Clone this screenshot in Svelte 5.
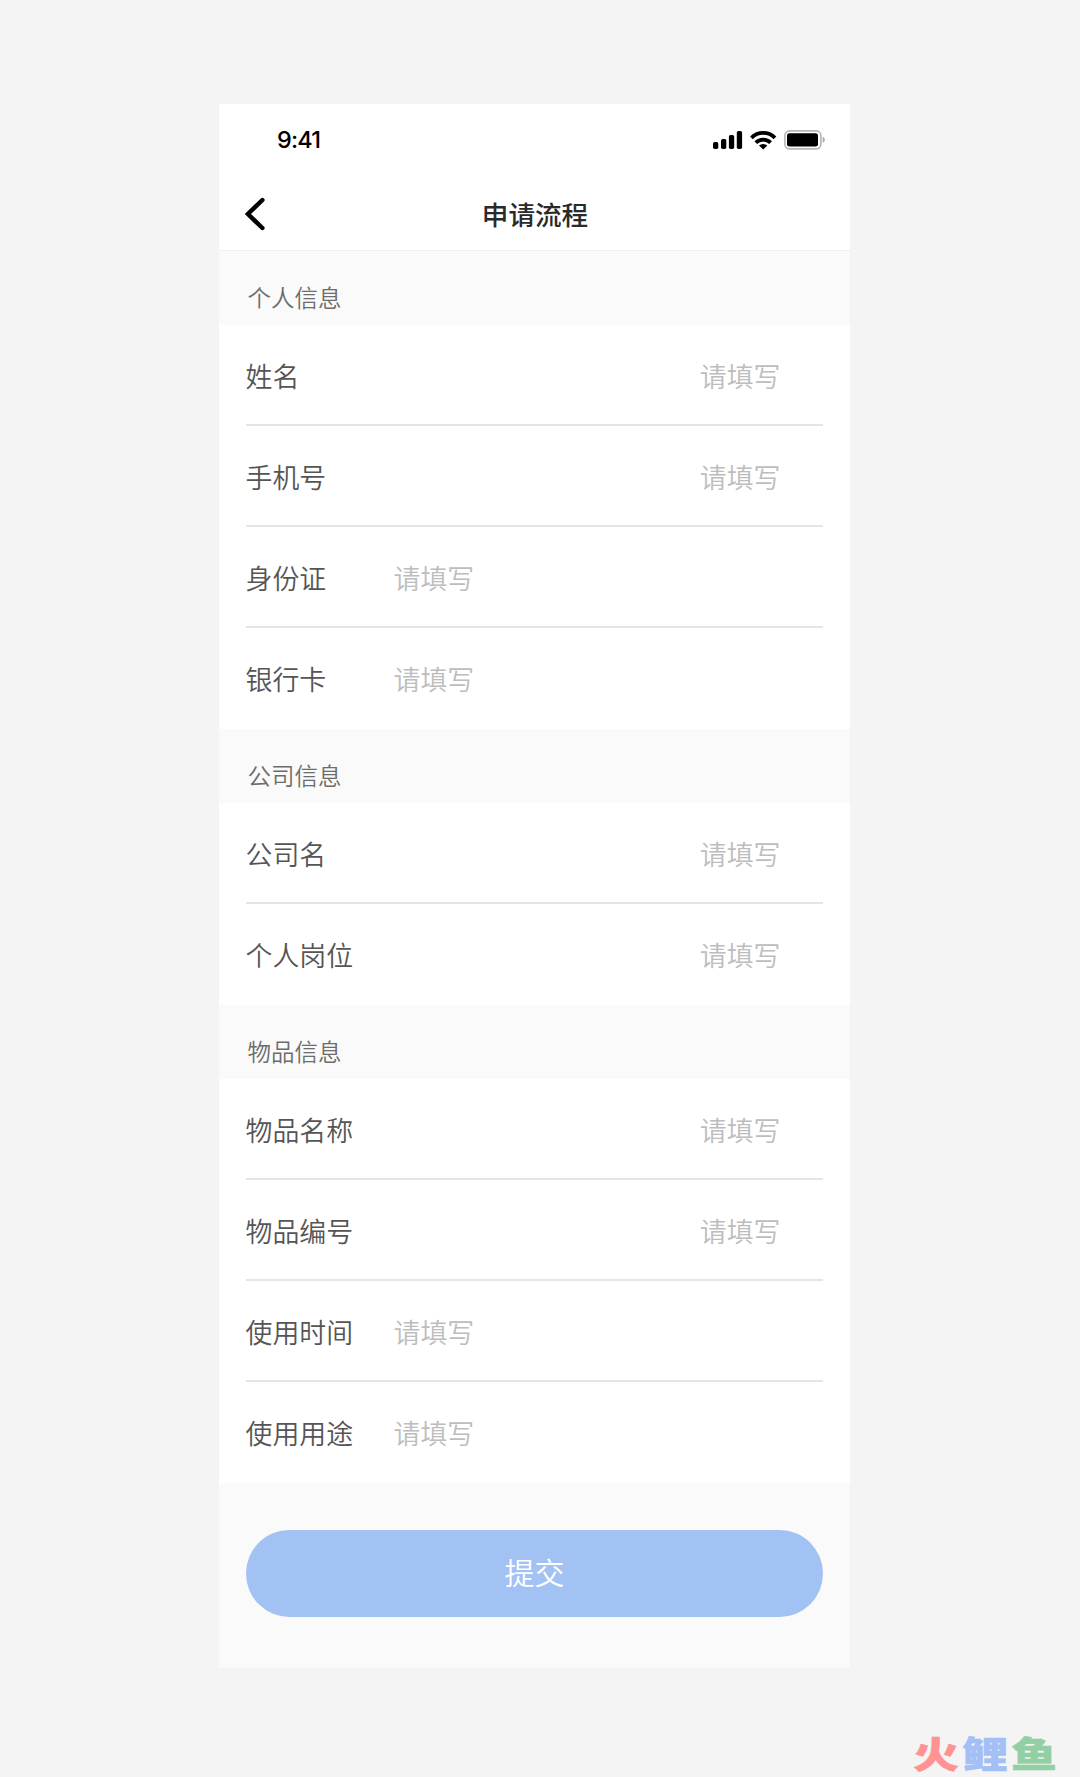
<script lang="ts">
  type Field = { label: string; align: "left" | "right" };
  type Section = { title: string; fields: Field[] };

  const placeholder = "请填写";

  const sections: Section[] = [
    {
      title: "个人信息",
      fields: [
        { label: "姓名", align: "right" },
        { label: "手机号", align: "right" },
        { label: "身份证", align: "left" },
        { label: "银行卡", align: "left" },
      ],
    },
    {
      title: "公司信息",
      fields: [
        { label: "公司名", align: "right" },
        { label: "个人岗位", align: "right" },
      ],
    },
    {
      title: "物品信息",
      fields: [
        { label: "物品名称", align: "right" },
        { label: "物品编号", align: "right" },
        { label: "使用时间", align: "left" },
        { label: "使用用途", align: "left" },
      ],
    },
  ];
</script>

<div class="page">
  <main class="phone">
    <header class="top">
      <div class="status-bar">
        <span class="time">9:41</span>
        <svg class="status-icons" viewBox="0 0 113 20" width="113" height="20">
          <rect x="0" y="12" width="5.3" height="7" rx="1.7" />
          <rect x="8" y="9" width="5.3" height="10" rx="1.7" />
          <rect x="15.9" y="5" width="5.3" height="14" rx="1.7" />
          <rect x="23.8" y="1" width="5.3" height="18" rx="1.7" />
          <g fill="none" stroke="#000" stroke-width="3.8">
            <path d="M38.4 7.8a16.8 16.8 0 0 1 23.6 0" />
            <path d="M42.8 12.7a10.4 10.4 0 0 1 14.8 0" />
          </g>
          <path d="M46 15.6a6 6 0 0 1 8.4 0L50.2 19.6z" />
          <rect x="71.9" y="0.9" width="36" height="18" rx="4.6" fill="#fff" stroke="#b8b8b8" stroke-width="1.7" />
          <rect x="74" y="3.2" width="31" height="13.4" rx="2.4" />
          <path d="M109.7 6.8c2.8 1 2.8 5 0 6z" fill="#aaa" />
        </svg>
      </div>
      <div class="nav-bar">
        <svg class="back" viewBox="0 0 20 34" width="20" height="34">
          <path
            d="M17.4 3 2.9 17 17.4 31"
            fill="none"
            stroke="#000"
            stroke-width="4.4"
            stroke-linecap="round"
          />
        </svg>
        <h1>申请流程</h1>
      </div>
    </header>

    {#each sections as section}
      <section>
        <h2>{section.title}</h2>
        <div class="fields">
          {#each section.fields as field}
            <div class="field {field.align}">
              <span class="label">{field.label}</span>
              <span class="value">{placeholder}</span>
            </div>
          {/each}
        </div>
      </section>
    {/each}

    <footer>
      <button type="button">提交</button>
    </footer>
  </main>

  <div class="brand">
    <span class="red">火</span><span class="blue">鲤</span><span class="green">鱼</span>
  </div>
</div>

<style>
  :global(body) {
    margin: 0;
    background: #f4f4f4;
  }

  .page {
    position: relative;
    box-sizing: border-box;
    width: 1080px;
    height: 1777px;
    padding: 104px 0 0 218.5px;
    overflow: hidden;
    background: #f4f4f4;
    font-family: "Noto Sans CJK SC", sans-serif;
    font-weight: 350;
  }

  .phone {
    display: flex;
    flex-direction: column;
    width: 631px;
    height: 1563.5px;
    background: #fafafa;
  }

  .top {
    box-sizing: border-box;
    height: 147.4px;
    background: #fff;
    border-bottom: 1px solid #f1f1f1;
  }

  .status-bar {
    display: flex;
    align-items: center;
    justify-content: space-between;
    height: 72px;
    padding: 0 23.5px 0 58.5px;
  }

  .time {
    margin-top: -2px;
    font-family: Inter, sans-serif;
    font-size: 23.5px;
    font-weight: 500;
    letter-spacing: -0.8px;
    color: #000;
  }

  .nav-bar {
    display: grid;
    grid-template-columns: 20px 1fr 20px;
    align-items: center;
    height: 75px;
    padding: 0 26px;
  }

  h1 {
    margin: 0 0 0 2px;
    font-size: 26.6px;
    font-weight: 500;
    line-height: 40px;
    text-align: center;
    color: #2a2a2a;
  }

  h2 {
    box-sizing: border-box;
    height: 74px;
    margin: 0;
    padding: 28px 0 0 29px;
    font-size: 23.5px;
    font-weight: 350;
    line-height: 36px;
    color: #6c6c6c;
  }

  .fields {
    padding: 0 27px;
    background: #fff;
  }

  .field {
    display: flex;
    align-items: center;
    box-sizing: border-box;
    height: 100.95px;
    padding-top: 3px;
    border-bottom: 2px solid #e5e5e5;
    font-size: 26.9px;
    line-height: 40px;
  }

  .field:last-child {
    border-bottom-color: transparent;
  }

  .label {
    width: 148px;
    color: #555;
  }

  .value {
    color: #bdbdbd;
  }

  .right {
    justify-content: space-between;
    padding-right: 42px;
  }

  footer {
    padding: 47px 27px 0;
  }

  button {
    width: 100%;
    height: 87px;
    padding: 0 0 4px 1px;
    border: 0;
    border-radius: 44px;
    background: #a3c2f4;
    color: #fff;
    font-family: inherit;
    font-size: 30px;
    font-weight: 350;
    line-height: 44px;
  }

  /* sits over the bottom corner of the page */
  .brand {
    position: absolute;
    right: 23px;
    bottom: 2px;
    display: flex;
    gap: 3px;
    font-size: 46px;
    font-weight: 900;
    line-height: 45px;
    -webkit-text-stroke: 0.6px;
    transform: scaleY(0.8);
  }

  .red {
    color: #ff9292;
  }

  .blue {
    color: #a4bff5;
  }

  .green {
    color: #92cfa4;
  }
</style>
